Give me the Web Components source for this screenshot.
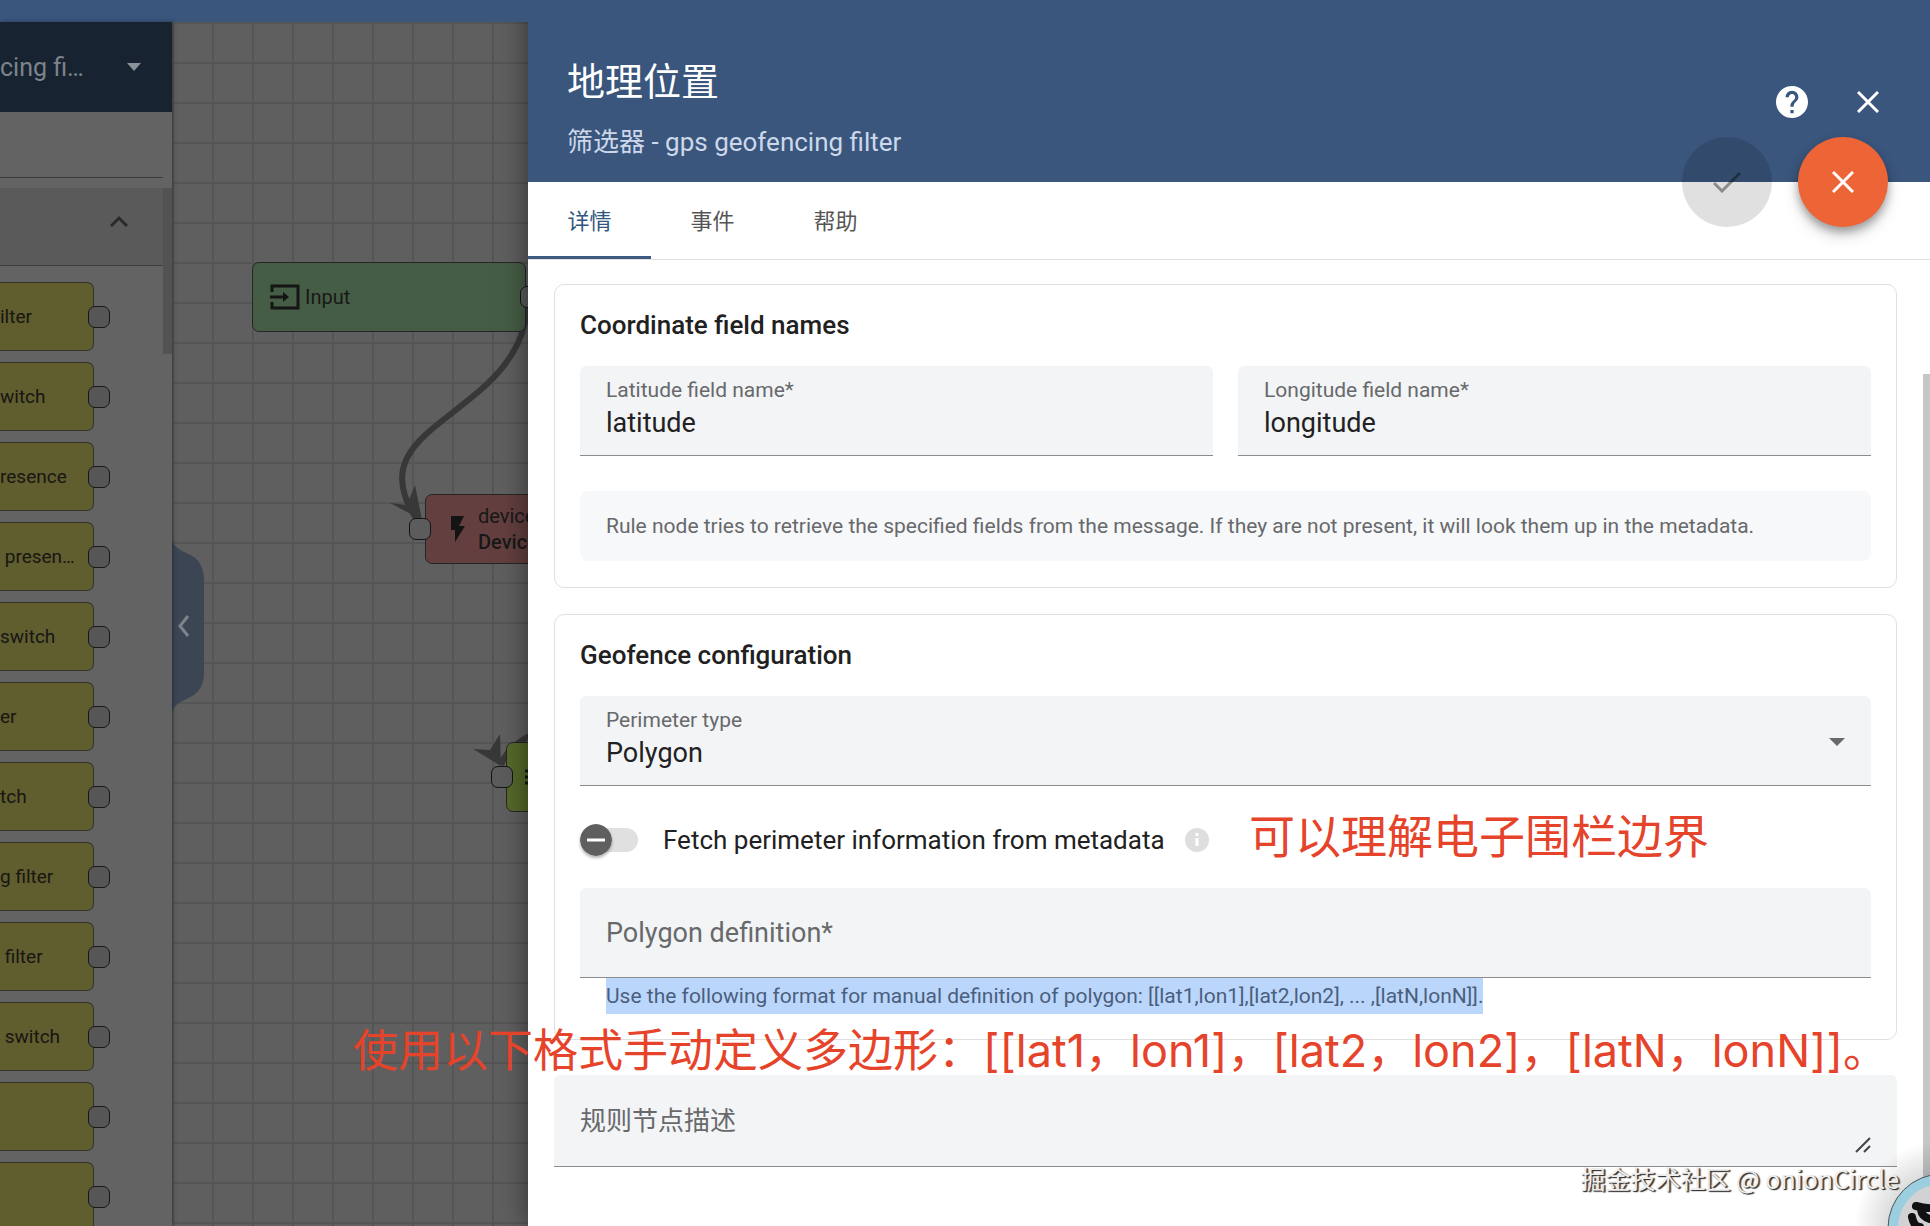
<!DOCTYPE html>
<html lang="zh-CN">
<head>
<meta charset="utf-8">
<meta name="viewport" content="width=device-width, initial-scale=1">
<title>地理位置 - gps geofencing filter</title>
<style>
  :root {
    --primary: #3a567d;
    --ink: #212121;
    --muted: #67696b;
    --line: #e0e0e0;
    --field: #f3f4f6;
    --note: #e6432b;
  }
  body {
    margin: 0;
    font-family: Roboto, "Noto Sans CJK SC", sans-serif;
    color: var(--ink);
    background: #fff;
  }
</style>
</head>
<body>
<rule-editor></rule-editor>

<script>
const define = (name, html, setup) => {
  const tpl = document.createElement('template');
  tpl.innerHTML = html;
  customElements.define(name, class extends HTMLElement {
    constructor() {
      super();
      this.attachShadow({ mode: 'open' }).append(tpl.content.cloneNode(true));
    }
    connectedCallback() { if (setup) setup(this, this.shadowRoot); }
  });
};

/* Library entry on the left: coloured box with an output connector */
define('palette-node', `
  <style>
    :host { display: flex; align-items: center; height: 69px; }
    .box { box-sizing: border-box; width: 94px; height: 69px; padding: 0; display: flex; align-items: center; white-space: pre; overflow: hidden;
      background: #605d2f; border: 1px solid #34352a; border-left: 0; border-radius: 0 7px 7px 0; color: #171612; font-size: 19px; }
    .pin { box-sizing: border-box; width: 22px; height: 22px; margin-left: -6px; border: 1px solid #171717; border-radius: 7px; background: #565656; }
  </style>
  <div class="box"><slot></slot></div><span class="pin"></span>`);

define('node-palette', `
  <style>
    :host { display: flex; flex-direction: column; width: 172px; flex: none; background: #636363; overflow: hidden; box-shadow: 1px 0 4px rgba(0,0,0,.35); z-index: 1; }
    header { flex: none; height: 90px; display: flex; align-items: center; justify-content: space-between; background: #182331; color: #7d838b; font-size: 25px; }
    header button { all: unset; display: flex; padding-right: 31px; }
    .search { flex: none; height: 65px; margin-right: 9px; border-bottom: 1px solid #3c3c3c; margin-bottom: 10px; }
    .body { flex: 1; min-height: 0; display: flex; }
    .list { flex: 1; min-width: 0; overflow: hidden; }
    .bar { width: 9px; }
    .thumb { height: 166px; background: #535353; }
    .group { box-sizing: border-box; width: 100%; height: 78px; display: flex; align-items: center; justify-content: flex-end; padding: 0 35px 12px 0;
      background: #5a5a5a; border: 0; border-bottom: 1px solid #3f3f3f; }
    .nodes { display: flex; flex-direction: column; gap: 11px; padding-top: 16px; }
  </style>
  <header><span>cing fi…</span>
    <button aria-label="rule chain"><svg width="14" height="8" viewBox="0 0 14 8"><path d="M0 0h14L7 8z" fill="#8b9199"/></svg></button>
  </header>
  <div class="search"></div>
  <div class="body">
    <div class="list">
      <button class="group" aria-label="toggle group"><svg width="18" height="12" viewBox="0 0 18 12"><path d="M1 11l8-8 8 8" fill="none" stroke="#2a2a2a" stroke-width="3"/></svg></button>
      <div class="nodes">
        <palette-node>ilter</palette-node>
        <palette-node>witch</palette-node>
        <palette-node>resence</palette-node>
        <palette-node>&nbsp;presen…</palette-node>
        <palette-node>switch</palette-node>
        <palette-node>er</palette-node>
        <palette-node>tch</palette-node>
        <palette-node>g filter</palette-node>
        <palette-node>&nbsp;filter</palette-node>
        <palette-node>&nbsp;switch</palette-node>
        <palette-node></palette-node>
        <palette-node></palette-node>
      </div>
    </div>
    <div class="bar"><div class="thumb"></div></div>
  </div>`);

/* Free canvas; nodes sit at their diagram coordinates */
define('rule-canvas', `
  <style>
    :host { display: block; position: relative; flex: 1; min-width: 0; overflow: hidden; background-color: #5f5f5f;
      background-image: linear-gradient(to left, #555 2px, transparent 2px), linear-gradient(to top, #555 2px, transparent 2px); background-size: 40px 40px; background-position: 2px 2px; }
    svg.links { position: absolute; left: 0; top: 0; }
    .node { position: absolute; box-sizing: border-box; display: flex; align-items: center; height: 70px; border: 1px solid #262626; border-radius: 7px; font-size: 20px; color: #181818; white-space: nowrap; }
    .pin { position: absolute; box-sizing: border-box; width: 22px; height: 22px; border: 1px solid #141414; border-radius: 7px; background: #5c5c5c; }
    .in { left: 80px; top: 240px; width: 274px; padding-left: 17px; gap: 5px; background: #465d45; }
    .dev { left: 253px; top: 472px; width: 300px; padding-left: 24px; gap: 13px; background: #643f3f; line-height: 26px; }
    .lime { left: 334px; top: 720px; width: 300px; padding-left: 18px; background: #56692a; }
    b { display: block; font-weight: 500; }
    .handle { position: absolute; left: 0; top: 516px; border: 0; padding: 0; background: none; }
  </style>
  <svg class="links" width="400" height="900" viewBox="172 22 400 900" fill="none" stroke="#383838" stroke-width="6">
    <path d="M528 297C528 420 345 420 420 524"/><path d="M501 765Q508 745 536 733"/>
    <path d="M422 520L390 503L407 505L415 485ZM501 766L473 749L490 750L500 734Z" fill="#383838" stroke="none"/>
  </svg>
  <div class="node in"><svg width="30" height="26" viewBox="0 0 30 26" fill="none" stroke="#151515" stroke-width="3"><path d="M2 8V2h26v22H2v-6"/><path d="M0 13h15"/><path d="M13 8l6 5-6 5z" fill="#151515" stroke="none"/></svg><span>Input</span></div>
  <span class="pin" style="left:348px;top:264px"></span>
  <div class="node dev"><svg width="15" height="26" viewBox="0 0 15 26"><path d="M1 0h13L9 10h6L5 26V14H1z" fill="#141414"/></svg><div>device<b>Device</b></div></div>
  <span class="pin" style="left:237px;top:496px"></span>
  <div class="node lime"><svg width="24" height="20" viewBox="0 0 24 20" stroke="#151515" stroke-width="3"><path d="M0 4h24M0 10h24M0 16h24"/></svg></div>
  <span class="pin" style="left:319px;top:744px"></span>
  <button class="handle" aria-label="collapse"><svg width="32" height="178" viewBox="0 0 32 178"><path d="M0 2C6 20 30 10 32 40V136C30 166 6 156 0 174Z" fill="#3c4554"/><path d="M16 78l-8 10 8 10" fill="none" stroke="#7d838b" stroke-width="3"/></svg></button>`);

/* Filled form field: text, select or multi-line */
define('form-field', `
  <style>
    :host { display: block; flex: 1; min-width: 0; --pad: 26px; }
    .f { box-sizing: border-box; position: relative; height: 90px; display: grid; grid-template-rows: 24px 36px; row-gap: 3px; align-content: start; padding: 12px var(--pad) 0;
      background: var(--field); border-bottom: 1px solid #8a8c8e; border-radius: 6px 6px 0 0; }
    label { font-size: 21px; line-height: 24px; color: var(--muted); }
    input, select, textarea { all: unset; box-sizing: border-box; width: 100%; font-size: 27px; line-height: 36px; color: var(--ink); white-space: pre; }
    .arrow { position: absolute; right: 26px; top: 42px; }
    .grip { position: absolute; right: 26px; bottom: 13px; }
    .empty { grid-template-rows: 1fr; padding-top: 0; align-content: stretch; }
    .empty > label, .empty > .c { grid-area: 1 / 1; }
    .empty > label { font-size: 27px; align-self: center; line-height: 32px; }
    .empty > .c { height: 100%; }
    .area { height: 92px; }
    .area > label { font-size: 26px; }
  </style>
  <div class="f"></div>`, (host, root) => {
  const f = root.querySelector('.f');
  const kind = host.getAttribute('kind') || 'input';
  const value = host.getAttribute('value') || '';
  f.innerHTML = '<label for="c"></label>' + {
    input: '<input id="c" class="c" type="text">',
    select: '<select id="c" class="c"><option>Polygon</option><option>Circle</option></select><svg class="arrow" width="16" height="8" viewBox="0 0 16 8"><path d="M0 0h16L8 8z" fill="#67696b"/></svg>',
    area: '<textarea id="c" class="c"></textarea><svg class="grip" width="16" height="16" viewBox="0 0 16 16"><path d="M1 15L15 1M9 15l6-6" stroke="#444" stroke-width="2"/></svg>'
  }[kind];
  f.querySelector('label').textContent = host.getAttribute('label');
  if (value) f.querySelector('.c').value = value; else f.classList.add('empty');
  if (kind === 'area') f.classList.add('area');
});

define('form-card', `
  <style>
    :host { display: flex; flex-direction: column; padding: 25px 25px 26px; border: 1px solid var(--line); border-radius: 10px; }
    h2 { margin: 0 0 26px; font-size: 26px; line-height: 30px; font-weight: 500; }
  </style>
  <h2><slot name="title"></slot></h2><slot></slot>`);

define('toggle-row', `
  <style>
    :host { display: flex; align-items: center; box-sizing: border-box; height: 102px; padding-top: 6px; font-size: 26px; }
    label { display: flex; align-items: center; }
    .sw { position: relative; width: 58px; height: 32px; margin-right: 25px; display: flex; align-items: center; }
    input { appearance: none; margin: 0; width: 58px; height: 24px; border-radius: 12px; background: #e0e0e0; }
    .sw svg { position: absolute; left: 0; top: 0; border-radius: 50%; box-shadow: 0 2px 3px rgba(0,0,0,.3); }
    .info { margin-left: 20px; }
  </style>
  <label><span class="sw"><input type="checkbox" role="switch"><svg width="32" height="32" viewBox="0 0 32 32"><circle cx="16" cy="16" r="16" fill="#5f5f5f"/><path d="M7 16h18" stroke="#fff" stroke-width="3"/></svg></span><slot></slot></label>
  <svg class="info" width="24" height="24" viewBox="0 0 24 24"><circle cx="12" cy="12" r="12" fill="#dedede"/><path d="M12 5v3M12 10v8" stroke="#fff" stroke-width="3"/></svg>`);

define('drawer-header', `
  <style>
    :host { display: flex; justify-content: space-between; box-sizing: border-box; height: 182px; padding: 57px 43px 0 39px; background: var(--primary); color: #fff; position: relative; }
    h1 { margin: 0; font-size: 38px; line-height: 50px; font-weight: 400; }
    p { margin: 19px 0 0; font-size: 26px; line-height: 32px; color: #cdd8ea; }
    .tools { display: flex; gap: 38px; height: 32px; margin-top: 29px; }
    button { border: 0; padding: 0; background: none; display: grid; place-items: center; }
    .tools button { width: 38px; height: 32px; }
    .fabs { position: absolute; right: 42px; bottom: -45px; display: flex; gap: 26px; }
    .fabs button { width: 90px; height: 90px; border-radius: 50%; }
    .ok { background: rgba(0,0,0,.12); }
    .no { background: #ed6537; box-shadow: 0 5px 8px rgba(0,0,0,.3), 0 9px 16px rgba(0,0,0,.14); }
  </style>
  <div><h1><slot name="title"></slot></h1><p><slot></slot></p></div>
  <div class="tools">
    <button aria-label="help"><svg width="32" height="32" viewBox="2 2 20 20"><path fill="#fff" d="M12 2C6.48 2 2 6.48 2 12s4.48 10 10 10 10-4.480 10-10S17.520 2 12 2zm1 17h-2v-2h2v2zm2.070-7.750l-.9.920C13.450 12.900 13 13.500 13 15h-2v-.5c0-1.100.450-2.100 1.170-2.830l1.240-1.260c.370-.360.590-.860.590-1.410 0-1.100-.9-2-2-2s-2 .9-2 2H8c0-2.210 1.790-4 4-4s4 1.790 4 4c0 .880-.360 1.680-.930 2.250z"/></svg></button>
    <button aria-label="close"><svg width="22" height="22" viewBox="0 0 22 22"><path d="M1 1l20 20M21 1L1 21" stroke="#fff" stroke-width="3"/></svg></button>
  </div>
  <div class="fabs">
    <button class="ok" aria-label="apply" disabled><svg width="28" height="22" viewBox="0 0 28 22"><path d="M1 12l8 8L27 2" fill="none" stroke="#000" stroke-opacity=".38" stroke-width="3"/></svg></button>
    <button class="no" aria-label="cancel"><svg width="22" height="22" viewBox="0 0 22 22"><path d="M1 1l20 20M21 1L1 21" stroke="#fff" stroke-width="3"/></svg></button>
  </div>`);

define('tab-bar', `
  <style>
    :host { display: flex; box-sizing: border-box; height: 78px; border-bottom: 1px solid var(--line); }
    button { border: 0; border-bottom: 3px solid transparent; background: none; padding: 0 39px; font: 400 22px Roboto, "Noto Sans CJK SC", sans-serif; color: #555; width: 123px; }
    button.on { color: #305680; border-color: #3f5a80; }
  </style>
  <button class="on">详情</button><button>事件</button><button>帮助</button>`);

define('node-drawer', `
  <style>
    :host { display: flex; flex-direction: column; min-width: 0; background: #fff; box-shadow: 0 0 26px rgba(0,0,0,.5); position: relative; }
    .body { flex: 1; min-height: 0; display: flex; }
    main { flex: 1; min-width: 0; padding: 24px 26px 0; display: flex; flex-direction: column; gap: 26px; }
    .scroll { width: 7px; padding-top: 114px; display: flex; }
    .scroll i { flex: 1; background: #c6c6c6; }
    .row { display: flex; gap: 25px; }
    .hint { margin-top: 35px; padding: 0 26px; background: #f7f8fa; border-radius: 8px; font-size: 21px; line-height: 70px; color: #67696b; white-space: nowrap; overflow: hidden; }
    .help { margin: 0 26px; font-size: 21px; line-height: 36px; color: #4a5f7d; height: 35px; white-space: nowrap; }
    .help mark { display: inline-block; background: #bbd6fb; color: inherit; }
    .desc { flex: none; margin-top: 9px; }
  </style>
  <drawer-header><span slot="title">地理位置</span>筛选器 - gps geofencing filter</drawer-header>
  <tab-bar></tab-bar>
  <div class="body">
    <main>
      <form-card><span slot="title">Coordinate field names</span>
        <div class="row"><form-field label="Latitude field name*" value="latitude"></form-field><form-field label="Longitude field name*" value="longitude"></form-field></div>
        <div class="hint">Rule node tries to retrieve the specified fields from the message. If they are not present, it will look them up in the metadata.</div>
      </form-card>
      <form-card><span slot="title">Geofence configuration</span>
        <form-field kind="select" label="Perimeter type" value="Polygon"></form-field>
        <toggle-row>Fetch perimeter information from metadata</toggle-row>
        <form-field label="Polygon definition*"></form-field>
        <div class="help"><mark>Use the following format for manual definition of polygon: [[lat1,lon1],[lat2,lon2], ... ,[latN,lonN]].</mark></div>
      </form-card>
      <form-field class="desc" kind="area" label="规则节点描述"></form-field>
    </main>
    <div class="scroll"><i></i></div>
  </div>`);

/* Notes written over the page, the signature and the assistant bubble */
define('page-notes', `
  <style>
    :host { position: absolute; inset: 0; overflow: hidden; pointer-events: none; }
    p { position: absolute; margin: 0; white-space: nowrap; color: var(--note); font: 400 46px/60px Inter, "Noto Sans CJK SC", sans-serif; }
    .a { left: 1249px; top: 806px; }
    .b { left: 353px; top: 1021px; font-size: 45px; }
    .sign { right: 31px; bottom: 30px; font: 400 25px/36px "Noto Sans CJK SC", sans-serif; color: #eee; text-shadow: 1px 1px 1px #333, 2px 1px 1px #555; }
    svg { position: absolute; right: 0; bottom: 0; }
  </style>
  <p class="a">可以理解电子围栏边界</p>
  <p class="b">使用以下格式手动定义多边形：[[lat1，lon1]，[lat2，lon2]，[latN，lonN]]。</p>
  <svg width="100" height="110" viewBox="0 0 100 110">
    <defs><radialGradient id="g"><stop offset=".6" stop-color="#000" stop-opacity=".14"/><stop offset="1" stop-color="#000" stop-opacity="0"/></radialGradient></defs>
    <circle cx="112" cy="112" r="88" fill="url(#g)"/>
    <circle cx="112" cy="112" r="54" fill="#9bcfdf" stroke="#4d5558" stroke-width="1"/>
    <circle cx="112" cy="112" r="44" fill="#d2d2d4"/>
    <path d="M86 90q8 2 12 2M82 101q2 10 8 10M91 94q1 7 9 9" fill="none" stroke="#111" stroke-width="8" stroke-linecap="round"/>
  </svg>
  <p class="sign">掘金技术社区 @ onionCircle</p>`);

define('rule-editor', `
  <style>
    :host { position: relative; display: grid; grid-template-columns: 528px 1fr; height: 100vh; overflow: hidden; }
    .left { display: flex; flex-direction: column; min-height: 0; }
    .top { height: 22px; background: var(--primary); position: relative; z-index: 1; }
    .work { flex: 1; min-height: 0; display: flex; }
  </style>
  <div class="left"><div class="top"></div><div class="work"><node-palette></node-palette><rule-canvas></rule-canvas></div></div>
  <node-drawer></node-drawer>
  <page-notes></page-notes>`);
</script>
</body>
</html>
